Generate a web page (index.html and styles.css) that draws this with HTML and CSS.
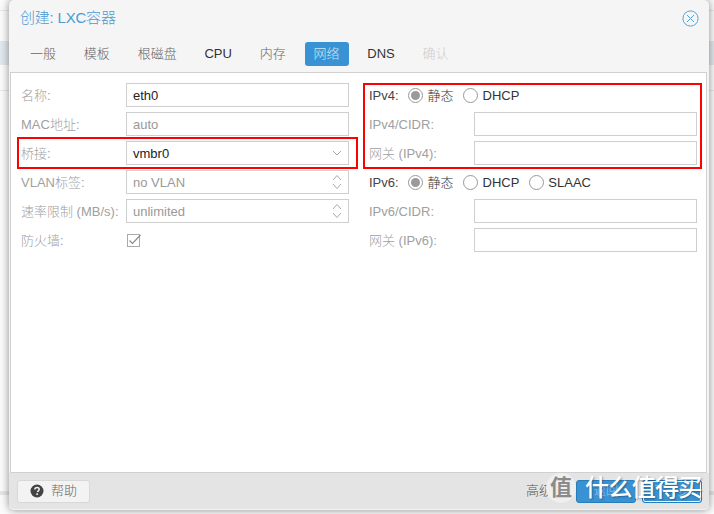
FILE: index.html
```html
<!DOCTYPE html>
<html lang="zh">
<head>
<meta charset="utf-8">
<title>创建: LXC容器</title>
<link rel="stylesheet" href="styles.css">
</head>
<body>
<div class="backdrop">
  <div class="bg-row bg-row-a"></div>
  <div class="bg-row bg-row-b"></div>
  <div class="bg-row bg-row-c"></div>
  <div class="bg-row bg-row-d"></div>
</div>
<main class="window">
  <header class="title-bar">
    <h1 class="title">创建: LXC容器</h1>
    <svg class="close" width="17" height="17" viewBox="0 0 17 17" aria-hidden="true"><circle cx="8.5" cy="8.5" r="7.6" fill="none" stroke="#5a9fd2" stroke-width="1"/><path d="M5 5l7 7M12 5l-7 7" fill="none" stroke="#5a9fd2" stroke-width="1"/></svg>
  </header>
  <nav class="tabs">
    <span class="tab muted">一般</span>
    <span class="tab muted">模板</span>
    <span class="tab muted">根磁盘</span>
    <span class="tab">CPU</span>
    <span class="tab muted">内存</span>
    <span class="tab active">网络</span>
    <span class="tab">DNS</span>
    <span class="tab off">确认</span>
  </nav>
  <section class="panel">
    <div class="col col-left">
      <div class="row"><label class="lbl">名称:</label><div class="field dark">eth0</div></div>
      <div class="row"><label class="lbl">MAC地址:</label><div class="field">auto</div></div>
      <div class="row"><label class="lbl">桥接:</label><div class="field dark">vmbr0<svg class="arrow" width="10" height="6" viewBox="0 0 10 6"><path d="M1 1l4 4 4-4" fill="none" stroke="#aaa"/></svg></div></div>
      <div class="row"><label class="lbl">VLAN标签:</label><div class="field">no VLAN<svg class="spin" width="10" height="16" viewBox="0 0 10 16"><path d="M1 6l4-4.500L9 6M1 10l4 4.500L9 10" fill="none" stroke="#aaa"/></svg></div></div>
      <div class="row"><label class="lbl">速率限制 (MB/s):</label><div class="field">unlimited<svg class="spin" width="10" height="16" viewBox="0 0 10 16"><path d="M1 6l4-4.500L9 6M1 10l4 4.500L9 10" fill="none" stroke="#aaa"/></svg></div></div>
      <div class="row"><label class="lbl">防火墙:</label><svg class="check" width="14" height="14" viewBox="0 0 14 14"><rect x=".5" y="1.500" width="12" height="12" fill="none" stroke="#aaa"/><path d="M2.500 7.500l3 3L13.500 2" fill="none" stroke="#888" stroke-width="1.100"/></svg></div>
    </div>
    <div class="col col-right">
      <div class="row"><span class="lbl-ip">IPv4:</span><span class="radio on"></span><span class="opt">静态</span><span class="radio"></span><span class="opt">DHCP</span></div>
      <div class="row"><label class="lbl">IPv4/CIDR:</label><div class="field"></div></div>
      <div class="row"><label class="lbl">网关 (IPv4):</label><div class="field"></div></div>
      <div class="row"><span class="lbl-ip">IPv6:</span><span class="radio on"></span><span class="opt">静态</span><span class="radio"></span><span class="opt">DHCP</span><span class="radio"></span><span class="opt">SLAAC</span></div>
      <div class="row"><label class="lbl">IPv6/CIDR:</label><div class="field"></div></div>
      <div class="row"><label class="lbl">网关 (IPv6):</label><div class="field"></div></div>
    </div>
  </section>
  <footer class="foot">
    <button class="help"><svg width="14" height="14" viewBox="0 0 14 14"><circle cx="7" cy="7" r="6.500" fill="#444"/><path d="M4.900 5.400c0-1.300 1-2 2.200-2s2.100.8 2.100 1.900c0 1.500-1.700 1.500-1.700 2.800" fill="none" stroke="#f5f5f5" stroke-width="1.500"/><rect x="6.300" y="9.300" width="1.700" height="1.600" fill="#f5f5f5"/></svg>帮助</button>
    <div class="foot-right">
      <span class="adv">高级</span>
      <button class="btn">返回</button>
      <button class="btn outline">下一步</button>
    </div>
  </footer>
</main>
<div class="red red-bridge"></div>
<div class="red red-ipv4"></div>
<div class="wm"><span class="wm-badge">值</span><span class="wm-text">什么值得买</span></div>
</body>
</html>
```
FILE: styles.css
```css
* { box-sizing: border-box; }
html, body { margin: 0; height: 100%; }
body {
  width: 714px; height: 514px; overflow: hidden; position: relative;
  background: #fbfbfb;
  font: 300 13px/1.2 "Liberation Sans", "Noto Sans CJK SC", sans-serif;
  padding: 0 5px 4px 9px;
}
.backdrop { position: absolute; inset: 0; }
.bg-row { position: absolute; left: 0; right: 0; }
.bg-row-a { top: 10px; height: 1px; background: #e8e8e8; }
.bg-row-b { top: 41px; height: 24px; background: #e2e9ee; }
.bg-row-c { top: 90px; height: 1px; background: #e8e8e8; }
.bg-row-d { top: 491px; height: 4px; background: #e6e6e6; }
.window {
  position: relative; height: 510px; display: flex; flex-direction: column;
  background: #f5f5f5; border-radius: 5px;
  box-shadow: 0 0 9px rgba(0,0,0,.45);
}
.title-bar { height: 36px; display: flex; align-items: center; justify-content: space-between; padding: 0 10px 0 11px; }
.title { margin: 0; font-size: 15px; font-weight: 300; color: #4a9bd4; letter-spacing: -.2px; }
.tabs { height: 36px; display: flex; align-items: flex-start; gap: 9.8px; padding: 6px 0 0 12px; }
.tab { height: 24px; line-height: 24px; padding: 0 9px; color: #333; font-size: 13px; border-radius: 3px; }
.tab.muted { color: #666; }
.tab.active { background: #3892d3; color: #cfe4f3; }
.tab.off { color: #ccc; }
.panel {
  flex: 1; background: #fff; display: flex; margin: 0 2px 0 1px;
  border: 1px solid #d0d0d0;
  padding: 10px 0 0 10px;
}
.col { display: flex; flex-direction: column; gap: 5px; width: 328px; }
.col-left { margin-right: 20px; }
.row { height: 24px; display: flex; align-items: center; }
.lbl { width: 105px; flex: none; color: #a0a0a0; padding-top: 1px; }
.field {
  flex: 1; height: 24px; border: 1px solid #cfcfcf; padding: 0 6px;
  line-height: 23px; color: #999; position: relative; background: #fff;
}
.field.dark { color: #222; }
.arrow, .spin { position: absolute; right: 6px; }
.arrow { top: 8px; }
.spin { top: 3px; }
.check { display: block; margin-left: 1px; }
.lbl-ip { width: 39px; color: #444; padding-top: 1px; }
.radio { width: 15px; height: 15px; border: 1px solid #999; border-radius: 50%; flex: none; margin-right: 4.5px; background: #fff; position: relative; }
.radio.on::after { content: ""; position: absolute; inset: 2px; background: #9a9a9a; border-radius: 50%; }
.opt { color: #333; margin-right: 9.5px; padding-top: 1px; }
.foot { height: 37px; background: #e4e4e4; display: flex; justify-content: space-between; align-items: center; padding: 0 7px 0 8px; border-radius: 0 0 5px 5px; border-bottom: 1px solid #f2f2f2; }
.help { width: 73px; height: 23px; background: #f3f3f3; border: 1px solid #d8d8d8; border-radius: 3px; font: inherit; color: #666; display: flex; align-items: center; justify-content: center; gap: 7px; padding: 0; }
.foot-right { display: flex; align-items: center; gap: 6px; }
.adv { color: #555; width: 44px; }
.btn { width: 60px; height: 23px; background: #3892d3; border: 1px solid #2a7cb8; border-radius: 3px; color: #9cc8e8; font: inherit; font-size: 12px; padding: 0; }
.outline { box-shadow: inset 0 0 0 1px #fff; }
.red { position: absolute; border: 2px solid #f00; }
.red-bridge { left: 17px; top: 137px; width: 341px; height: 32px; }
.red-ipv4 { left: 363px; top: 83px; width: 339px; height: 86px; }
.wm { position: absolute; left: 546px; top: 472px; display: flex; align-items: center; }
.wm-badge { width: 30px; height: 30px; border-radius: 50%; background: #efefef; color: #8a8a8a; font-size: 22px; line-height: 30px; text-align: center; font-weight: 700; }
.wm-text { font-size: 24px; line-height: 32px; color: #fff; margin-left: 9px; text-shadow: 1px 1px 2px rgba(0,0,0,.35); white-space: nowrap; letter-spacing: -.6px; font-weight: 500; }
```
